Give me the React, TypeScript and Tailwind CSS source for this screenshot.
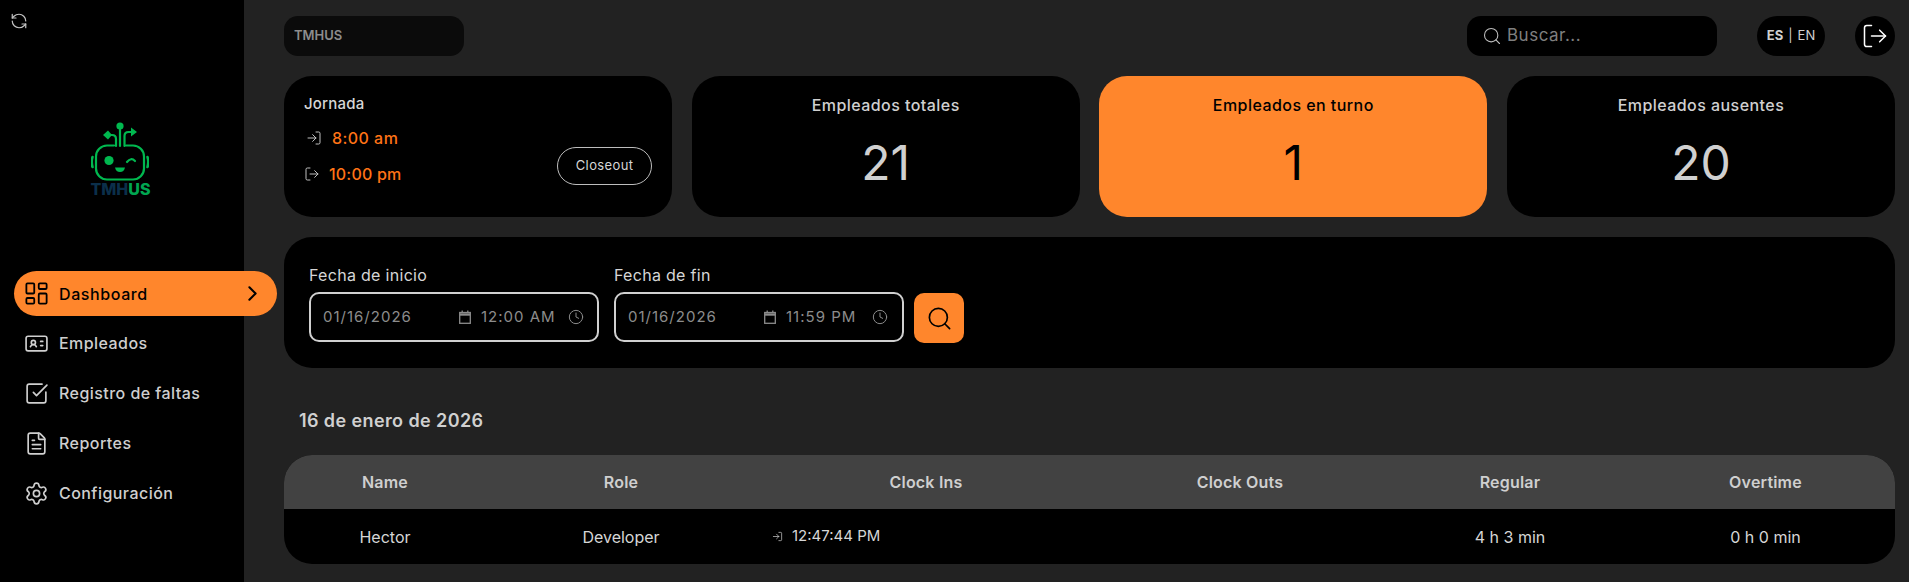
import { ChevronRight, Clock, FileText, IdCard, LayoutDashboard, LogIn, LogOut, RefreshCcw, Search, Settings, SquareCheckBig } from 'lucide-react';

const navItems = [
  { label: 'Empleados', icon: IdCard },
  { label: 'Registro de faltas', icon: SquareCheckBig },
  { label: 'Reportes', icon: FileText },
  { label: 'Configuración', icon: Settings },
];

const stats = [
  { label: 'Empleados totales', value: '21', active: false },
  { label: 'Empleados en turno', value: '1', active: true },
  { label: 'Empleados ausentes', value: '20', active: false },
];

function Logo() {
  return (
    <div className="flex flex-col items-center">
      <svg width="58" height="61" viewBox="0 0 58 61" fill="none" stroke="#00b84f" strokeWidth="2.2" strokeLinecap="round">
        <circle cx="29" cy="6" r="3.600" fill="#00b84f" stroke="none" />
        <path d="M29 8v18" />
        <path d="M25 26v-7q0-4-4-4h-2" />
        <path d="M12 15l5-4.500 4 4.500-4 4.500z" fill="#00b84f" stroke="none" />
        <path d="M33.500 26v-10q0-4 4-4h4" />
        <path d="M40 7.500l6 4.500-6 4.500z" fill="#00b84f" stroke="none" />
        <path d="M23 25.500h-7a11 11 0 0 0-11 11v12a11 11 0 0 0 11 11h26a11 11 0 0 0 11-11v-12a11 11 0 0 0-11-11h-7" />
        <path d="M1.500 37q-1.500 5 0 10M56.500 37q1.500 5 0 10" strokeWidth="2.600" />
        <circle cx="18" cy="40.500" r="4.600" fill="#00b84f" stroke="none" />
        <path d="M36 42q4-5 8-1" />
        <path d="M24 47.500h10q-1 4.500-5 4.500t-5-4.500z" fill="#00b84f" stroke="none" />
      </svg>
      <div className="mt-[1px] text-[16px] leading-[14px] font-extrabold">
        <span className="text-[#0b2f4a]">TMH</span>
        <span className="text-[#00a651]">US</span>
      </div>
    </div>
  );
}

function Sidebar() {
  return (
    <aside className="relative z-10 flex h-[582px] w-[244px] shrink-0 flex-col bg-black">
      <div className="pt-[12px] pl-[10px]">
        <RefreshCcw className="h-[18px] w-[18px] text-[#c4c4c4]" strokeWidth={1.6} />
      </div>
      <div className="mt-[90px] flex justify-center pr-[3px]">
        <Logo />
      </div>
      <nav className="mt-[75px] pl-[14px]">
        <div className="flex h-[45px] w-[263px] items-center rounded-full bg-[#ff862c] pr-[12px] pl-[9px] text-black">
          <LayoutDashboard className="h-[27px] w-[27px]" strokeWidth={1.6} />
          <span className="ml-[9px] flex-1 text-[16px] font-medium tracking-[0.6px]">Dashboard</span>
          <ChevronRight className="h-[25px] w-[25px]" strokeWidth={2} />
        </div>
        <div className="mt-[2px] flex flex-col">
          {navItems.map(({ label, icon: Icon }) => (
            <div key={label} className="flex h-[50px] items-center pl-[10px] text-[#cfcfcf]">
              <Icon className="h-[25px] w-[25px]" strokeWidth={1.6} />
              <span className="ml-[10px] text-[16px] font-medium tracking-[0.45px]">{label}</span>
            </div>
          ))}
        </div>
      </nav>
    </aside>
  );
}

function TopBar() {
  return (
    <div className="flex h-[40px] items-center">
      <div className="flex h-[40px] w-[180px] items-center rounded-[14px] bg-[#0b0b0b] pl-[10px] text-[13px] font-semibold text-[#8d8d8d]">
        TMHUS
      </div>
      <div className="ml-auto flex h-[40px] w-[250px] items-center rounded-[14px] bg-black pl-[15px] text-[#7f7f7f]">
        <Search className="h-[20px] w-[20px] text-[#bdbdbd]" strokeWidth={1.3} />
        <span className="ml-[5px] text-[17px] tracking-[0.5px]">Buscar...</span>
      </div>
      <div className="mr-[30px] ml-[40px] flex h-[40px] w-[68px] items-center justify-center rounded-full bg-black text-[13px] text-[#d0d0d0]">
        <span className="font-bold">ES</span>
        <span className="mx-[5px]">|</span>
        <span>EN</span>
      </div>
      <div className="flex h-[40px] w-[40px] items-center justify-center rounded-full bg-black">
        <LogOut className="h-[28px] w-[28px] text-white" strokeWidth={1.3} />
      </div>
    </div>
  );
}

function ShiftCard() {
  return (
    <div className="relative h-[141px] rounded-[28px] bg-black pt-[18px] pl-[20px] text-[#d6d6d6]">
      <div className="text-[15px] font-medium leading-[20px] tracking-[0.2px]">Jornada</div>
      <div className="mt-[14px] flex h-[20px] items-center pl-[2px]">
        <LogIn className="h-[16px] w-[16px] text-[#c0c0c0]" strokeWidth={1.5} />
        <span className="ml-[10px] text-[16px] font-medium tracking-[0.45px] text-[#ff7316]">8:00 am</span>
      </div>
      <div className="mt-[16px] flex h-[20px] items-center">
        <LogOut className="h-[16px] w-[16px] text-[#c0c0c0]" strokeWidth={1.5} />
        <span className="ml-[9px] text-[16px] font-medium tracking-[0.2px] text-[#ff7316]">10:00 pm</span>
      </div>
      <div className="absolute top-[71px] right-[20px] flex h-[38px] w-[95px] items-center justify-center rounded-full border border-[#bdbdbd] text-[13px] tracking-[0.4px]">
        Closeout
      </div>
    </div>
  );
}

function StatCard({ label, value, active }: { label: string; value: string; active: boolean }) {
  return (
    <div className={`flex h-[141px] flex-col items-center rounded-[28px] pt-[17px] ${active ? 'bg-[#ff862c] text-black' : 'bg-black text-[#d0d0d0]'}`}>
      <div className="text-[16px] font-medium leading-[24px] tracking-[0.45px]">{label}</div>
      <div className="mt-[15px] text-[48px] leading-[62px]">{value}</div>
    </div>
  );
}

function CalendarGlyph() {
  return (
    <svg width="12" height="14" viewBox="0 0 12 14" className="shrink-0 text-[#8c8c8c]" fill="none" stroke="currentColor" strokeWidth="1.300">
      <rect x="0.700" y="2.500" width="10.600" height="10.800" />
      <path d="M0.700 4.500h10.600" strokeWidth="2.400" />
      <path d="M3.200 0.500v2M8.800 0.500v2" />
    </svg>
  );
}

function DateField({ label, date, time, timeWidth }: { label: string; date: string; time: string; timeWidth: string }) {
  return (
    <div className="w-[290px]">
      <div className="text-[16px] leading-[20px] tracking-[0.3px] text-[#d6d6d6]">{label}</div>
      <div className="mt-[7px] flex h-[50px] items-center rounded-[10px] border-2 border-[#d0d0d0] pl-[12px] text-[15px] tracking-[1px] text-[#8c8c8c]">
        <span className="w-[136px]">{date}</span>
        <CalendarGlyph />
        <span className={`ml-[10px] ${timeWidth}`}>{time}</span>
        <Clock className="h-[16px] w-[16px]" strokeWidth={1.5} />
      </div>
    </div>
  );
}

function Filters() {
  return (
    <div className="mt-[20px] flex h-[131px] items-start rounded-[28px] bg-black pt-[28px] pl-[25px]">
      <DateField label="Fecha de inicio" date="01/16/2026" time="12:00 AM" timeWidth="w-[87px]" />
      <div className="ml-[15px]">
        <DateField label="Fecha de fin" date="01/16/2026" time="11:59 PM" timeWidth="w-[86px]" />
      </div>
      <div className="mt-[28px] ml-[10px] flex h-[50px] w-[50px] items-center justify-center rounded-[10px] bg-[#ff862c]">
        <Search className="h-[27px] w-[27px] text-black" strokeWidth={1.5} />
      </div>
    </div>
  );
}

function AttendanceTable() {
  const cols = 'grid grid-cols-[202px_270px_340px_288px_252px_259px]';
  return (
    <div className="mt-[22px] overflow-hidden rounded-[28px] bg-black">
      <div className={`${cols} h-[54px] items-center bg-[#424242] text-center text-[16px] font-semibold tracking-[0.2px] text-[#cfcfcf]`}>
        <div>Name</div>
        <div>Role</div>
        <div>Clock Ins</div>
        <div>Clock Outs</div>
        <div>Regular</div>
        <div>Overtime</div>
      </div>
      <div className={`${cols} h-[55px] items-center text-center text-[16px] text-[#d6d6d6]`}>
        <div>Hector</div>
        <div>Developer</div>
        <div className="flex items-center pl-[16px]">
          <LogIn className="h-[11px] w-[11px]" strokeWidth={1.5} />
          <span className="ml-[9px] text-[15px]">12:47:44 PM</span>
        </div>
        <div />
        <div>4 h 3 min</div>
        <div>0 h 0 min</div>
      </div>
    </div>
  );
}

export default function App() {
  return (
    <div className="flex h-[582px] w-[1909px] overflow-hidden bg-[#222222] font-['Inter',sans-serif]">
      <Sidebar />
      <main className="flex-1 pt-[16px] pr-[14px] pl-[40px]">
        <TopBar />
        <div className="mt-[20px] grid grid-cols-4 gap-[19.500px]">
          <ShiftCard />
          {stats.map((s) => (
            <StatCard key={s.label} {...s} />
          ))}
        </div>
        <Filters />
        <div className="mt-[41px] pl-[15px] text-[18px] font-semibold leading-[24px] tracking-[0.4px] text-[#d0d0d0]">16 de enero de 2026</div>
        <AttendanceTable />
      </main>
    </div>
  );
}
